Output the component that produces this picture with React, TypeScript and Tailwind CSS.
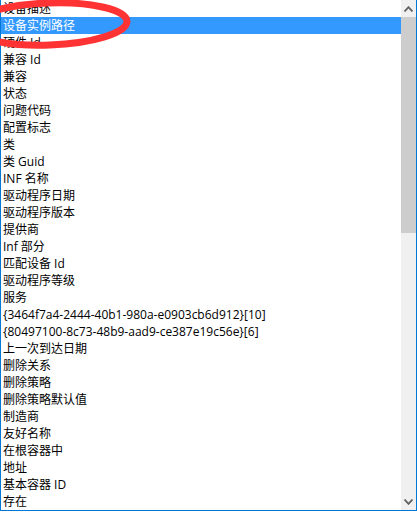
import React from 'react'

const items = [
  '设备描述',
  '设备实例路径',
  '硬件 Id',
  '兼容 Id',
  '兼容',
  '状态',
  '问题代码',
  '配置标志',
  '类',
  '类 Guid',
  'INF 名称',
  '驱动程序日期',
  '驱动程序版本',
  '提供商',
  'Inf 部分',
  '匹配设备 Id',
  '驱动程序等级',
  '服务',
  '{3464f7a4-2444-40b1-980a-e0903cb6d912}[10]',
  '{80497100-8c73-48b9-aad9-ce387e19c56e}[6]',
  '上一次到达日期',
  '删除关系',
  '删除策略',
  '删除策略默认值',
  '制造商',
  '友好名称',
  '在根容器中',
  '地址',
  '基本容器 ID',
  '存在',
]

const SELECTED = 1

function Chevron({ down }: { down?: boolean }) {
  return (
    <svg width="9" height="6" viewBox="0 0 9 6" className={down ? 'rotate-180' : ''}>
      <path d="M0.5 5.5 L4.5 1.2 L8.5 5.5" fill="none" stroke="#606060" strokeWidth="1.8" />
    </svg>
  )
}

export default function App() {
  return (
    <div className="relative w-[417px] h-[512px] bg-white overflow-hidden">
      <div
        className="flex h-[511px] border-l border-r border-b border-[#0078d7] bg-white"
        style={{ fontFamily: '"Open Sans", "Noto Sans CJK SC", sans-serif' }}
      >
        {/* list */}
        <div className="flex-1 flex flex-col">
          {items.map((label, i) => (
            <div
              key={label}
              className={`h-[17px] shrink-0 pl-[2px] text-[12px] leading-[17px] whitespace-nowrap ${
                i === SELECTED ? 'bg-[#3399ff] text-white' : 'text-black'
              }`}
            >
              {label}
            </div>
          ))}
        </div>

        {/* scrollbar */}
        <div className="w-[15px] shrink-0 flex flex-col bg-[#f0f0f0]">
          <div className="h-[17px] flex items-center justify-center">
            <Chevron />
          </div>
          <div className="h-[216px] bg-[#cdcdcd]" />
          <div className="flex-1" />
          <div className="h-[17px] flex items-center justify-center">
            <Chevron down />
          </div>
        </div>
      </div>

      {/* red annotation circle */}
      <svg className="absolute left-0 top-0 pointer-events-none" width="150" height="60">
        <ellipse
          cx="49"
          cy="24"
          rx="78"
          ry="21"
          fill="none"
          stroke="#ff3333"
          strokeWidth="7"
          transform="rotate(-2 49 24)"
        />
      </svg>
    </div>
  )
}
